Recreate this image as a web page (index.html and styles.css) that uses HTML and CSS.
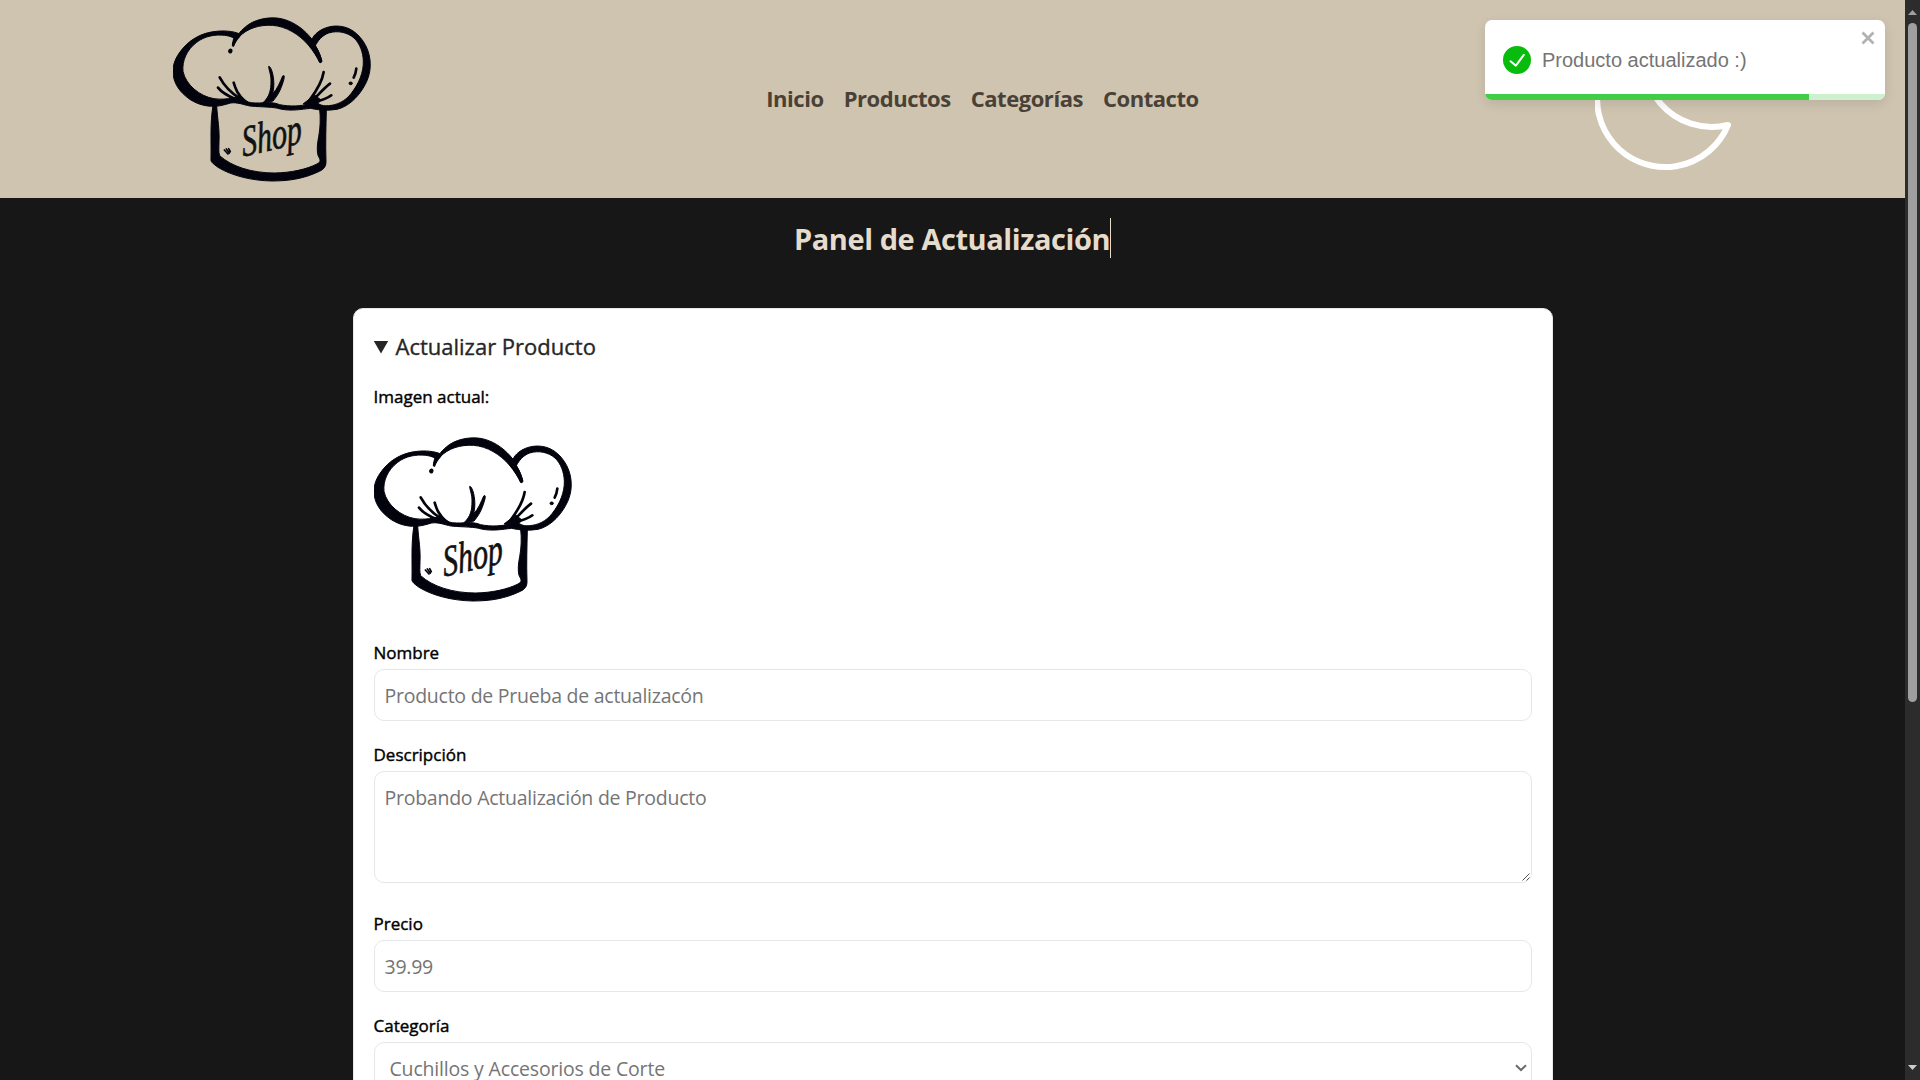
FILE: index.html
```html
<!DOCTYPE html>
<html lang="es">
<head>
<meta charset="utf-8">
<title>Panel de Actualización</title>
<link rel="stylesheet" href="styles.css">
</head>
<body>
<svg class="defs" aria-hidden="true">
  <symbol id="chef-hat" viewBox="40 0 600 594">
    <g fill="#03030d" stroke="#03030d" stroke-width="3">
      <path fill-rule="evenodd" d="M238 101C222 94 195 91 170 94C125 98 85 120 58 160C45 180 40 195 40 216C41 250 60 277 92 299C118 315 140 319 165 319C185 318 198 313 213 309C235 306 249 314 271 318C315 322 340 320 362 327C395 334 425 328 452 325C475 330 502 333 532 328C565 320 592 294 610 265C628 236 634 210 631 180C627 140 602 102 568 86C535 71 497 79 475 96C466 103 460 110 457 118C437 92 407 66 365 56C325 48 280 60 257 81C248 89 242 94 238 101ZM218 138C221 127 228 119 237 112C263 84 300 74 338 76C380 79 418 103 446 135C462 154 473 173 480 187C484 189 487 186 486 181C480 160 474 147 467 137C475 122 486 107 507 99C535 90 565 98 583 114C601 131 610 157 611 183C612 216 598 251 574 281C556 304 532 315 507 317C496 318 485 317 478 312C468 309 458 309 450 311C425 319 389 320 360 314C340 306 320 307 300 309C282 309 267 309 259 302C247 292 232 292 218 294C203 297 185 299 163 296C120 289 78 254 70 214C67 184 80 150 111 127C135 108 166 103 195 106C212 108 222 113 225 118C221 125 218 132 218 138Z"/>
      <path d="M222 116L238 101L240 110C231 120 225 130 222 139C217 141 217 134 222 116Z"/>
      <path d="M440 108L457 118L467 137C476 152 483 168 486 181C487 187 483 189 480 187C474 172 463 153 446 133Z"/>
      <path d="M160 316L171 318C174 360 180 390 178 425C178 443 176 455 180 467C215 499 275 519 345 519C395 518 440 508 472 492C485 485 482 480 475 466C471 450 473 430 477 410C482 385 483 353 480 328L500 328C499 380 497 430 499 485C499 500 492 508 479 514C435 535 392 543 337 543C275 542 216 527 175 502C158 489 152 485 154 475C155 423 151 370 160 316Z"/>
      <path d="M327 199C335 199 345 232 342 264L339 281C354 266 361 246 369 228C375 224 375 230 371 244C362 273 354 286 340 303L310 308C330 290 334 270 334 243C334 222 328 213 327 199Z"/>
      <path d="M205 300L240 288L268 310L230 308Z"/>
      <path d="M430 312L465 285L484 300L470 316Z"/>
      <ellipse cx="573" cy="250" rx="5" ry="4"/>
      <ellipse cx="212" cy="153" rx="5" ry="6" transform="rotate(25 212 153)"/>
    </g>
    <g fill="none" stroke="#03030d" stroke-width="8" stroke-linecap="round">
      <path d="M180 232C194 258 212 277 240 295M175 263C188 280 205 288 228 298M222 248C228 268 234 284 256 304"/>
      <path d="M492 216C488 242 474 268 450 300M511 251C494 264 480 280 462 298M515 286C500 298 484 302 462 306"/>
      <path d="M590 206C589 216 586 225 582 233"/>
      <path stroke-width="5" d="M194 450L205 462M200 447L209 459M207 446L212 455"/>
    </g>
    <text class="hat-word" x="0" y="0" transform="translate(250 470) rotate(-13) skewX(-8)" textLength="184" lengthAdjust="spacingAndGlyphs">Shop</text>
  </symbol>
</svg>

<div class="window">
  <div class="page">
    <header class="header">
      <div class="header-side"><svg class="logo"><use href="#chef-hat"/></svg></div>
      <nav class="nav">
        <a>Inicio</a><a>Productos</a><a>Categorías</a><a>Contacto</a>
      </nav>
      <div class="header-side">
        <svg class="moon" viewBox="0 0 150 150"><path d="M54 11A68 68 0 1 0 133 103A68 68 0 0 1 54 11Z"/></svg>
      </div>
    </header>
    <main class="main">
      <h1 class="title"><span>Panel de Actualización</span></h1>
      <section class="card">
        <div class="summary"><i class="marker"></i><span>Actualizar Producto</span></div>
        <div class="current">Imagen actual:</div>
        <svg class="logo product"><use href="#chef-hat"/></svg>
        <div class="field"><label>Nombre</label><div class="input">Producto de Prueba de actualizacón</div></div>
        <div class="field"><label>Descripción</label><div class="input area">Probando Actualización de Producto
          <svg class="grip" viewBox="0 0 8 8"><path d="M0.5 7.5L7.5 0.5M4.5 7.5L7.5 4.5"/></svg></div></div>
        <div class="field"><label>Precio</label><div class="input">39.99</div></div>
        <div class="field"><label>Categoría</label><div class="input select"><span>Cuchillos y Accesorios de Corte</span>
          <svg class="chevron" viewBox="0 0 12 8"><path d="M1 1.2L6 6L11 1.2"/></svg></div></div>
      </section>
    </main>
  </div>
  <aside class="scrollbar"><i class="arrow up"></i><i class="thumb"></i><i class="arrow down"></i></aside>
</div>

<div class="toast">
  <svg class="check" viewBox="0 0 28 28"><circle cx="14" cy="14" r="14"/><path d="M7.5 15.3L12.9 19.6L20.8 8.8"/></svg>
  <span>Producto actualizado :)</span>
  <svg class="close" viewBox="0 0 14 14"><path d="M1.5 1.5L12.5 12.5M12.5 1.5L1.5 12.5"/></svg>
  <div class="progress"><div class="bar" style="width:81%"></div></div>
</div>
</body>
</html>
```
FILE: styles.css
```css
* { box-sizing: border-box; }
html, body { height: 100%; }
body { margin: 0; overflow: hidden; background: #171717; font-family: "Open Sans", "Noto Sans", sans-serif; }
.defs { position: absolute; width: 0; height: 0; }
.window { display: flex; height: 100vh; }
.page { flex: 1; height: 100%; overflow: hidden; }

.header { display: flex; align-items: center; justify-content: space-between; height: 198px; padding: 0 113px 0 173px; background: #cfc4b0; }
.header-side { display: flex; width: 200px; height: 198px; align-items: center; }
.logo { display: block; width: 200px; height: 198px; }
.hat-word { font: italic 130px "Liberation Serif", serif; fill: #111; stroke: #111; stroke-width: 2; }
.nav { display: flex; gap: 20px; margin-bottom: 2px; font-size: 22px; line-height: 30px; font-weight: 700; letter-spacing: -0.46px; color: #4a4136; }
.moon { width: 150px; height: 150px; margin: 0 0 4px 3px; fill: none; stroke: #fff; stroke-width: 6; stroke-linejoin: round; }

.title { display: flex; justify-content: center; margin: 20px 0 50px; font-size: 29px; line-height: 40px; font-weight: 700; letter-spacing: -0.43px; color: #e6dccb; }
.title span { height: 40px; padding-top: 1px; border-right: 1px solid #e6dccb; }
.card { width: 1200px; margin: 0 auto; padding: 20px; border: 1px solid #e5e7eb; border-radius: 10px; background: #fff; }
.summary { display: flex; align-items: center; gap: 7px; height: 36px; padding-bottom: 2px; font-size: 22px; color: #262626; -webkit-text-stroke: 0.35px; }
.marker { width: 15px; height: 13px; margin-top: 2px; background: #262626; clip-path: polygon(0 0, 100% 0, 50% 100%); }
.current { height: 24px; margin-top: 20px; font-size: 17px; line-height: 24px; color: #000; -webkit-text-stroke: 0.4px; }
.product { margin: 11px 0 23px; }
.field { margin-bottom: 22px; }
.field label { display: block; height: 24px; margin-bottom: 4px; font-size: 17px; line-height: 24px; color: #000; -webkit-text-stroke: 0.4px; }
.input { display: flex; align-items: center; height: 52px; padding: 2px 10px 0; border: 1px solid #e5e7eb; border-radius: 10px; font-size: 19.5px; line-height: 30px; letter-spacing: -0.25px; color: #757575; }
.area { position: relative; align-items: flex-start; height: 112px; padding-top: 11px; margin-bottom: 29px; }
.grip { position: absolute; right: 1px; bottom: 1px; width: 8px; height: 8px; fill: none; stroke: #555; stroke-width: 1; }
.select { justify-content: space-between; padding: 2px 4px 0 15px; letter-spacing: -0.18px; }
.chevron { width: 12px; height: 8px; margin-bottom: 2px; fill: none; stroke: #6b6b6b; stroke-width: 2; }

.scrollbar { display: flex; flex-direction: column; align-items: center; width: 15px; height: 100%; padding: 10px 0; background: #2c2c2c; }
.arrow { width: 9px; height: 5px; background: #a0a0a0; }
.up { clip-path: polygon(50% 0, 100% 100%, 0 100%); }
.down { margin-top: auto; background: #ccc; clip-path: polygon(0 0, 100% 0, 50% 100%); }
.thumb { width: 9px; height: 679px; margin-top: 8px; border-radius: 5px; background: #9f9f9f; }

.toast { position: absolute; top: 20px; left: 1485px; display: flex; align-items: center; gap: 11px; width: 400px; height: 80px; padding: 0 18px; border-radius: 7px; background: #fff; box-shadow: 0 4px 12px rgba(0,0,0,.1); color: #757575; font: 20px "Liberation Sans", Arial, sans-serif; overflow: hidden; }
.check { width: 28px; height: 28px; fill: #07bc0c; }
.check path { fill: none; stroke: #fff; stroke-width: 2; stroke-linecap: round; stroke-linejoin: round; }
.close { position: absolute; top: 11px; right: 10px; width: 14px; height: 14px; stroke: #b2b2b2; stroke-width: 2.8; }
.progress { position: absolute; left: 0; bottom: 0; width: 100%; height: 6px; background: #cdf1cf; }
.bar { height: 100%; background: #42cd46; }
```
